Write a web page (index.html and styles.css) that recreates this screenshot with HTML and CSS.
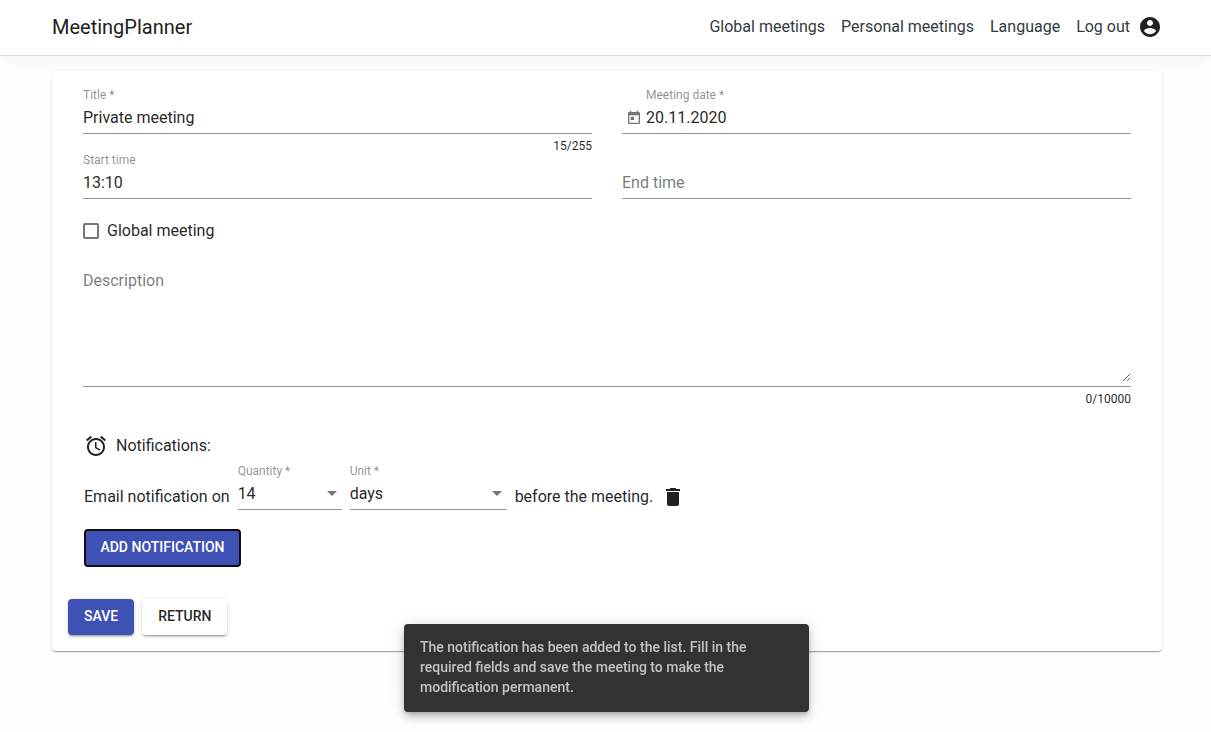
FILE: index.html
```
<!DOCTYPE html>
<html lang="en">
<head>
  <meta charset="utf-8">
  <meta name="viewport" content="width=device-width, initial-scale=1">
  <title>MeetingPlanner</title>
  <link rel="stylesheet" href="styles.css">
</head>
<body>
  <header class="topbar">
    <a class="brand" href="#">MeetingPlanner</a>
    <nav class="nav">
      <a href="#">Global meetings</a>
      <a href="#">Personal meetings</a>
      <a href="#">Language</a>
      <a class="logout" href="#">Log out
        <svg class="icon" viewBox="0 0 24 24" aria-hidden="true"><path d="M12 2C6.480 2 2 6.480 2 12s4.480 10 10 10 10-4.480 10-10S17.520 2 12 2zm0 3c1.660 0 3 1.340 3 3s-1.340 3-3 3-3-1.340-3-3 1.340-3 3-3zm0 14.200c-2.500 0-4.710-1.280-6-3.220.03-1.990 4-3.080 6-3.080 1.990 0 5.970 1.090 6 3.080-1.290 1.940-3.500 3.220-6 3.220z"/></svg>
      </a>
    </nav>
  </header>

  <main class="page">
    <form class="card">
      <div class="fields">
        <div class="grid">
          <div class="field">
            <label for="title">Title *</label>
            <div class="line"><input id="title" type="text" value="Private meeting" maxlength="255"></div>
            <div class="hint">15/255</div>
          </div>
          <div class="field">
            <label class="indent" for="date">Meeting date *</label>
            <div class="line">
              <button class="picker" type="button" aria-label="Open calendar">
                <svg viewBox="0 0 24 24" aria-hidden="true"><path d="M19 3h-1V1h-2v2H8V1H6v2H5c-1.110 0-2 .9-2 2v14c0 1.100.89 2 2 2h14c1.100 0 2-.9 2-2V5c0-1.100-.9-2-2-2zm0 16H5V8h14v11zM7 10h5v5H7z"/></svg>
              </button>
              <input id="date" type="text" value="20.11.2020">
            </div>
          </div>
          <div class="field">
            <label for="start">Start time</label>
            <div class="line"><input id="start" type="text" value="13:10"></div>
          </div>
          <div class="field bottom">
            <div class="line"><input type="text" placeholder="End time" aria-label="End time"></div>
          </div>
        </div>

        <label class="check"><input type="checkbox">Global meeting</label>

        <div class="field">
          <div class="line area"><textarea placeholder="Description" aria-label="Description"></textarea></div>
          <div class="hint">0/10000</div>
        </div>

        <section class="notifications">
          <div class="heading">
            <svg class="icon" viewBox="0 0 24 24" aria-hidden="true"><path d="M22 5.720l-4.600-3.860-1.290 1.530 4.600 3.860L22 5.720zM7.880 3.390L6.600 1.860 2 5.710l1.290 1.530 4.590-3.850zM12.500 8H11v6l4.750 2.850.75-1.230-4-2.370V8zM12 4c-4.970 0-9 4.030-9 9s4.020 9 9 9c4.970 0 9-4.030 9-9s-4.030-9-9-9zm0 16c-3.870 0-7-3.130-7-7s3.130-7 7-7 7 3.130 7 7-3.130 7-7 7z"/></svg>
            <span>Notifications:</span>
          </div>
          <div class="rule">
            <span class="words">Email notification on</span>
            <div class="field quantity">
              <label for="quantity">Quantity *</label>
              <div class="line drop"><select id="quantity"><option>14</option></select></div>
            </div>
            <div class="field unit">
              <label for="unit">Unit *</label>
              <div class="line drop"><select id="unit"><option>days</option></select></div>
            </div>
            <span class="words">before the meeting.</span>
            <button class="delete" type="button" aria-label="Delete notification">
              <svg class="icon" viewBox="0 0 24 24" aria-hidden="true"><path d="M6 19c0 1.100.9 2 2 2h8c1.100 0 2-.9 2-2V7H6v12zM19 4h-3.500l-1-1h-5l-1 1H5v2h14V4z"/></svg>
            </button>
          </div>
          <button class="btn primary focused" type="button">ADD NOTIFICATION</button>
        </section>
      </div>

      <div class="actions">
        <button class="btn primary" type="button">SAVE</button>
        <button class="btn" type="button">RETURN</button>
      </div>
    </form>
  </main>

  <div class="snackbar" role="status">The notification has been added to the list. Fill in the required fields and save the meeting to make the modification permanent.</div>
</body>
</html>
```
FILE: styles.css
```
* {
  box-sizing: border-box;
}

body {
  margin: 0;
  background: #fefefe;
  color: rgba(0, 0, 0, 0.87);
  font: 400 16px/24px Roboto, sans-serif;
}

input,
select,
textarea,
button {
  margin: 0;
  padding: 0;
  border: 0;
  border-radius: 0;
  outline: 0;
  background: none;
  color: inherit;
  font: inherit;
}

.icon {
  display: block;
  width: 24px;
  height: 24px;
  fill: #212121;
}

.topbar {
  display: flex;
  align-items: center;
  justify-content: space-between;
  height: 56px;
  padding: 0 49px 2px 52px;
  border-bottom: 1px solid #dfdfdf;
  background: #fff;
  box-shadow: 0 4px 16px rgba(0, 0, 0, 0.05);
}

.topbar a {
  color: #343a40;
  text-decoration: none;
}

.topbar .brand {
  color: #212121;
  font-size: 20px;
}

.nav {
  display: flex;
  align-items: center;
  gap: 16px;
}

.nav .logout {
  display: flex;
  align-items: center;
  gap: 8px;
}

.page {
  padding: 15px 49px 16px 52px;
}

.card {
  position: relative;
  padding: 16px;
  border-radius: 4px;
  background: #fff;
  box-shadow: 0 2px 1px -1px rgba(0, 0, 0, 0.2), 0 1px 1px rgba(0, 0, 0, 0.14), 0 1px 3px rgba(0, 0, 0, 0.12);
}

.fields {
  padding: 0 15px;
}

.grid {
  display: grid;
  grid-template-columns: 1fr 1fr;
  column-gap: 30px;
}

.bottom {
  align-self: end;
}

.field label {
  display: block;
  color: rgba(0, 0, 0, 0.46);
  font-size: 12px;
  line-height: 16px;
}

.field .indent {
  padding-left: 24px;
}

.line {
  display: flex;
  align-items: center;
  height: 31px;
  border-bottom: 1px solid #949494;
}

.line input,
.line select {
  flex: 1;
  min-width: 0;
  height: 28px;
}

.line input {
  padding-bottom: 2px;
}

::placeholder {
  color: rgba(0, 0, 0, 0.54);
  opacity: 1;
}

.picker {
  width: 24px;
  height: 24px;
  padding: 0 4px;
}

.picker svg {
  display: block;
  width: 16px;
  height: 16px;
  fill: #757575;
}

.hint {
  margin: 4px 0 -2px;
  font-size: 12px;
  line-height: 16px;
  text-align: right;
}

.check {
  display: flex;
  align-items: center;
  gap: 8px;
  width: max-content;
  margin: 20px 0 25px;
}

.check input {
  width: 16px;
  height: 16px;
  border: 2px solid #757575;
  border-radius: 2px;
  appearance: none;
}

.area {
  height: auto;
  padding-bottom: 4px;
}

.area textarea {
  flex: 1;
  height: 114px;
  padding-top: 1px;
  resize: vertical;
}

.notifications {
  padding: 0 1px;
}

.heading {
  display: flex;
  align-items: center;
  gap: 8px;
  margin: 29px 0 5px;
}

.rule {
  display: flex;
  align-items: flex-end;
  gap: 8px;
}

.words {
  padding-bottom: 1px;
}

.quantity {
  flex: 0 1 104px;
}

.unit {
  flex: 0 1 157px;
}

.delete {
  padding-bottom: 1px;
}

.drop {
  position: relative;
}

.drop select {
  appearance: none;
}

.drop::after {
  position: absolute;
  top: 12px;
  right: 5px;
  border: 5px solid transparent;
  border-top-color: #757575;
  border-bottom: 0;
  content: "";
  pointer-events: none;
}

.btn {
  height: 36px;
  padding: 0 16px 2px;
  border-radius: 4px;
  background: #fff;
  box-shadow: 0 3px 1px -2px rgba(0, 0, 0, 0.2), 0 2px 2px rgba(0, 0, 0, 0.14), 0 1px 5px rgba(0, 0, 0, 0.12);
  font-size: 14px;
  font-weight: 500;
}

.primary {
  background: #3f51b5;
  color: #fff;
}

.focused {
  height: 38px;
  min-width: 157px;
  margin-top: 19px;
  padding: 0 14px 2px;
  border: 2px solid #101010;
  box-shadow: none;
}

.actions {
  display: flex;
  gap: 8px;
  margin-top: 32px;
}

.snackbar {
  position: fixed;
  right: 0;
  bottom: 20px;
  left: 2px;
  width: 405px;
  max-width: 100%;
  margin: 0 auto;
  padding: 13px 24px 15px 16px;
  border-radius: 4px;
  background: #323232;
  box-shadow: 0 3px 5px -1px rgba(0, 0, 0, 0.2), 0 6px 10px rgba(0, 0, 0, 0.14), 0 1px 18px rgba(0, 0, 0, 0.12);
  color: rgba(255, 255, 255, 0.7);
  font-size: 14px;
  font-weight: 500;
  line-height: 20px;
}
```
